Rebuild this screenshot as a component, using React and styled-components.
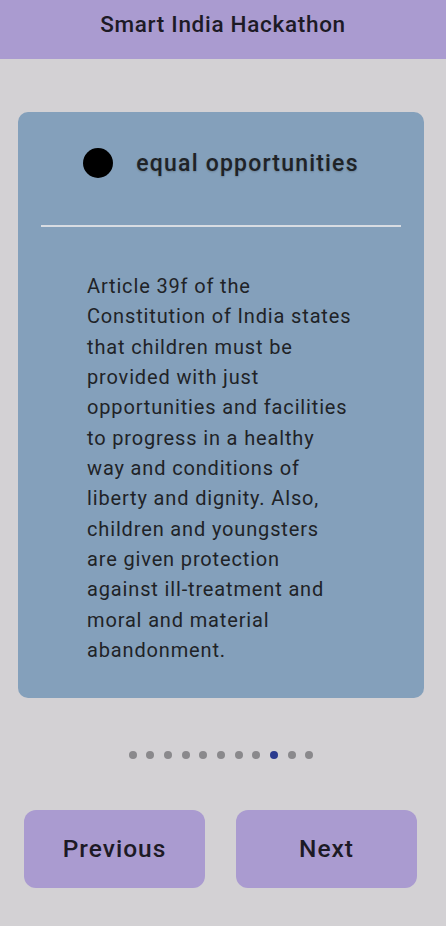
import React from "react";
import styled, { createGlobalStyle } from "styled-components";

const GlobalStyle = createGlobalStyle`
  html, body {
    margin: 0;
    padding: 0;
    background: #d3d1d4;
    font-family: Roboto, "Noto Sans", sans-serif;
  }
`;

const Page = styled.div`
  width: 446px;
  min-height: 926px;
  display: flex;
  flex-direction: column;
  background: #d3d1d4;
`;

const Header = styled.header`
  height: 59px;
  background: #aa9bd0;
  display: flex;
  justify-content: center;
  padding-top: 11px;
  box-sizing: border-box;
  font-size: 22.5px;
  font-weight: 500;
  letter-spacing: 0.7px;
  color: #1d1a25;
`;

const Card = styled.section`
  margin: 53px 22px 0 18px;
  height: 586px;
  box-sizing: border-box;
  border-radius: 10px;
  background: #84a0bb;
  padding: 35px 23px 0 23px;
  display: flex;
  flex-direction: column;
`;

const TitleRow = styled.div`
  display: flex;
  align-items: center;
  justify-content: center;
  gap: 23px;
  height: 32px;
`;

const Dot = styled.span`
  width: 30px;
  height: 30px;
  border-radius: 50%;
  background: #000;
`;

const Title = styled.h2`
  margin: 0;
  font-size: 23px;
  font-weight: 500;
  letter-spacing: 1.2px;
  color: #1f2327;
  text-shadow: 0 1px 2px rgba(0, 0, 0, 0.2);
`;

const Divider = styled.hr`
  border: 0;
  height: 2px;
  background: #d8dce2;
  margin: 46px 0 0 0;
`;

const Body = styled.p`
  margin: 44px 0 0 46px;
  width: 268px;
  font-size: 20px;
  line-height: 30.35px;
  letter-spacing: 0.85px;
  color: #1f2327;
`;

const Pager = styled.div`
  display: flex;
  justify-content: center;
  gap: 9.7px;
  margin-top: 53px;
  padding-right: 4px;
`;

const PageDot = styled.span`
  width: 8px;
  height: 8px;
  border-radius: 50%;
  background: ${(p) => (p.active ? "#2b3b8e" : "#8a898c")};
`;

const Buttons = styled.div`
  display: flex;
  gap: 31px;
  margin: 51px 0 0 24px;
`;

const Button = styled.button`
  width: 181px;
  height: 78px;
  border: 0;
  border-radius: 12px;
  background: #aa9bd0;
  font-family: Roboto, "Noto Sans", sans-serif;
  font-size: 24.5px;
  font-weight: 500;
  letter-spacing: 1px;
  color: #1d1a25;
  padding: 0 0 2px 0;
  cursor: pointer;
`;

const dots = Array.from({ length: 11 }, (_, i) => i);

export default function App() {
  return (
    <Page>
      <GlobalStyle />
      <Header>Smart India Hackathon</Header>
      <Card>
        <TitleRow>
          <Dot />
          <Title>equal opportunities</Title>
        </TitleRow>
        <Divider />
        <Body>
          Article 39f of the Constitution of India states that children must be
          provided with just opportunities and facilities to progress in a
          healthy way and conditions of liberty and dignity. Also, children and
          youngsters are given protection against ill-treatment and moral and
          material abandonment.
        </Body>
      </Card>
      <Pager>
        {dots.map((i) => (
          <PageDot key={i} active={i === 8} />
        ))}
      </Pager>
      <Buttons>
        <Button>Previous</Button>
        <Button>Next</Button>
      </Buttons>
    </Page>
  );
}
